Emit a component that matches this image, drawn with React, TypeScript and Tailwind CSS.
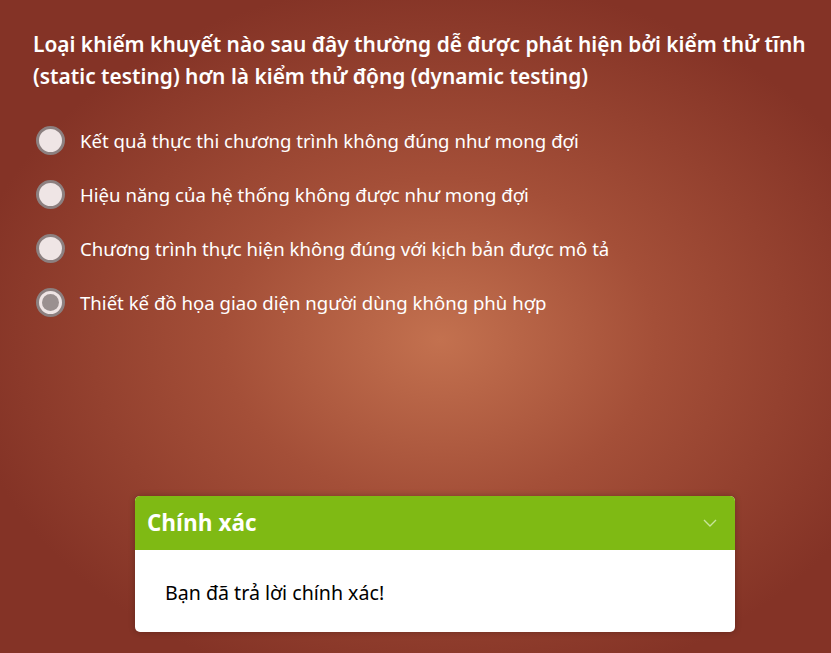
import React from "react";

const options = [
  "Kết quả thực thi chương trình không đúng như mong đợi",
  "Hiệu năng của hệ thống không được như mong đợi",
  "Chương trình thực hiện không đúng với kịch bản được mô tả",
  "Thiết kế đồ họa giao diện người dùng không phù hợp",
];

export default function App() {
  return (
    <div
      className="w-[831px] h-[653px] overflow-hidden bg-[radial-gradient(ellipse_480px_360px_at_440px_340px,#c3714f_0%,#a44f38_45%,#843326_100%)] flex flex-col"
      style={{ fontFamily: '"Noto Sans", "Open Sans", sans-serif' }}
    >
      <div className="pl-[33px] pr-[10px] pt-[28px] text-white text-[20.9px] font-semibold leading-[32px]">
        Loại khiếm khuyết nào sau đây thường dễ được phát hiện bởi kiểm thử tĩnh (static testing) hơn là kiểm thử động (dynamic testing)
      </div>
      <div className="flex flex-col gap-[25px] pl-[36px] pt-[34px]">
        {options.map((o, i) => (
          <div key={i} className="flex items-center gap-[15px] h-[29px]">
            <div className="w-[29px] h-[29px] rounded-full border-[3px] border-[#8c8080] bg-[#efe5e5] flex items-center justify-center shrink-0">
              {i === 3 && <div className="w-[17px] h-[17px] rounded-full bg-[#9a9090]" />}
            </div>
            <span className="text-white text-[18.6px] leading-[24px]">{o}</span>
          </div>
        ))}
      </div>
      <div className="mt-auto mb-[21px] ml-[135px] w-[600px] rounded-[5px] overflow-hidden bg-white shadow-[0_0_6px_rgba(0,0,0,0.25)]">
        <div className="h-[54px] bg-[#7fba14] flex items-center justify-between pl-[12px] pr-[18px]">
          <span className="text-white font-bold text-[22.5px]" style={{ fontFamily: '"Open Sans", sans-serif' }}>
            Chính xác
          </span>
          <svg width="14" height="8" viewBox="0 0 14 8" fill="none">
            <path d="M1 1l6 6 6-6" stroke="#c8e59a" strokeWidth="1.4" />
          </svg>
        </div>
        <div className="h-[82px] pl-[30px] pt-[31px] text-black text-[19.6px] leading-[24px]">
          Bạn đã trả lời chính xác!
        </div>
      </div>
    </div>
  );
}
